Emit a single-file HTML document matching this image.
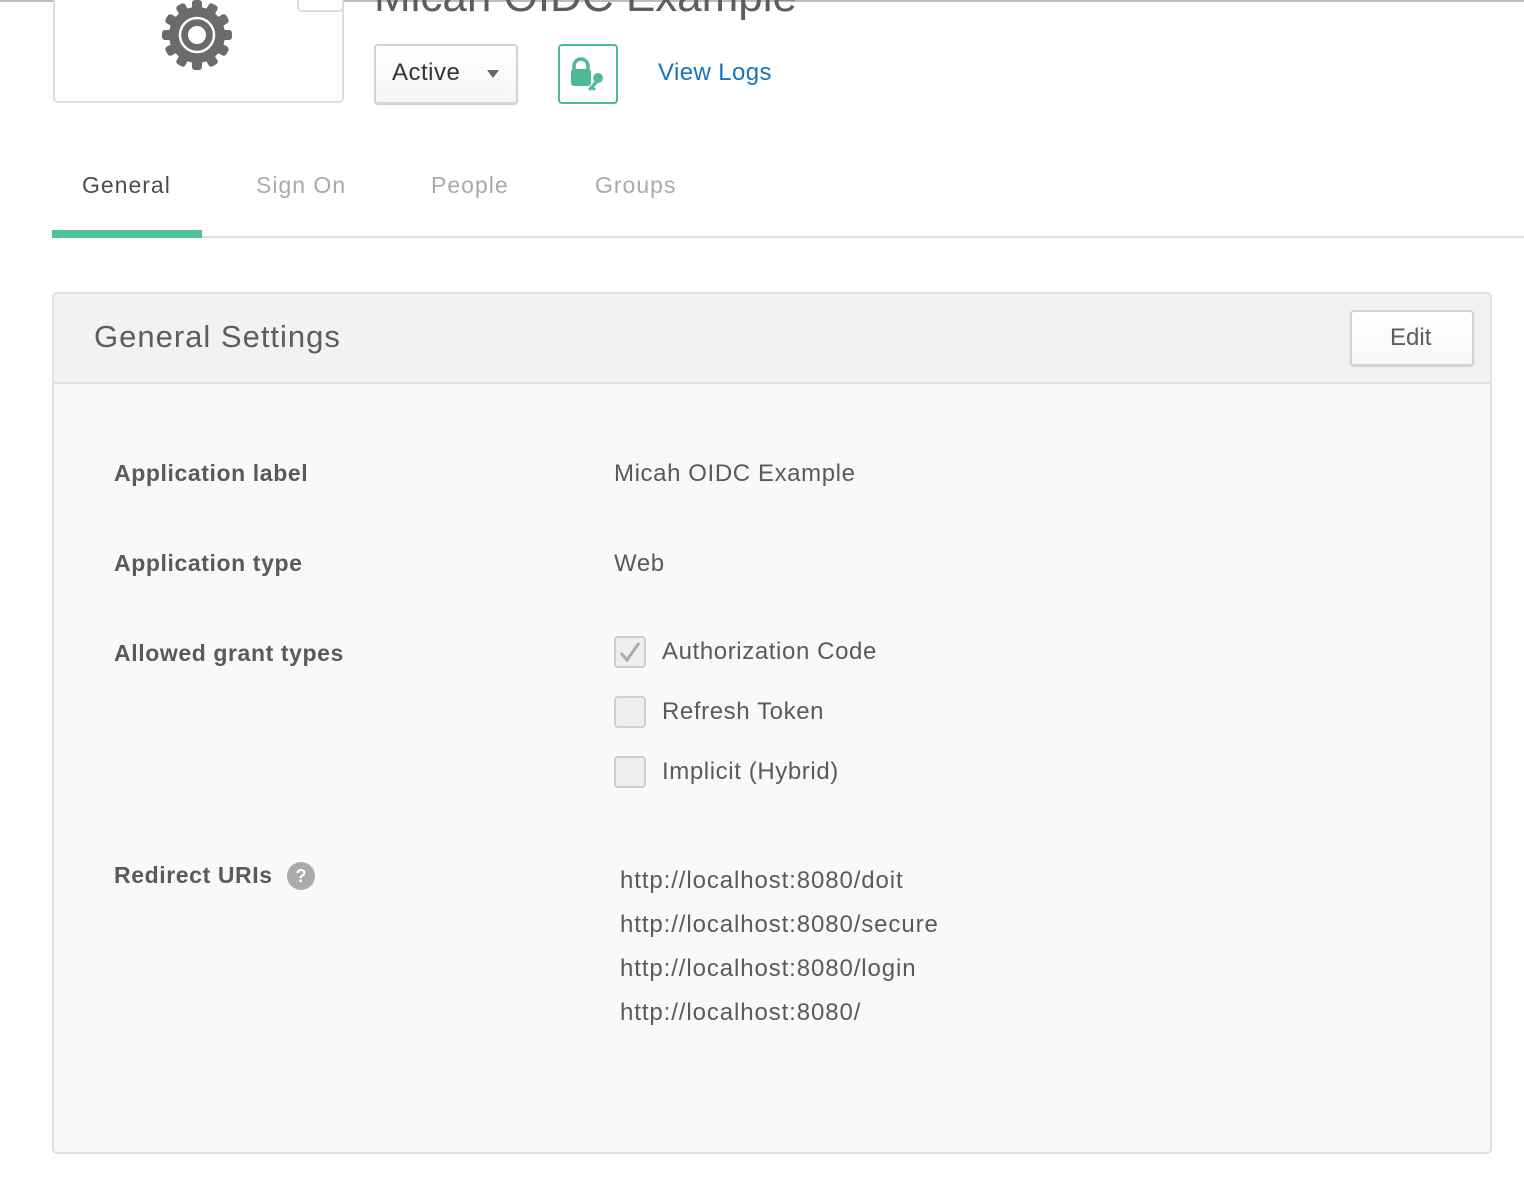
<!DOCTYPE html>
<html><head><meta charset="utf-8">
<style>
*{margin:0;padding:0;box-sizing:border-box}
body{width:1524px;height:1190px;background:#fff;font-family:"Liberation Sans",sans-serif;color:#5d5d5d;position:relative;overflow:hidden}
.a{position:absolute;white-space:nowrap}
.lbl{font-weight:bold;font-size:23px;color:#5a5a5a;letter-spacing:0.6px}
.val{font-size:24px;color:#5a5a5a;letter-spacing:0.6px}
.cb{position:absolute;width:32px;height:32px;border:2px solid #cfcfcf;border-radius:4px;background:#efefef}
.url{font-size:24px;color:#5a5a5a;letter-spacing:0.9px}
.tab{font-size:23px;letter-spacing:1px}
</style></head><body>
<div class="a" style="left:0;top:0;width:1524px;height:2px;background:#bdbdbd"></div>
<div class="a" style="left:53px;top:-10px;width:291px;height:113px;border:2px solid #ddd;border-radius:5px;background:#fff"></div>
<div class="a" style="left:297px;top:-10px;width:47px;height:22px;border:2px solid #ddd;border-radius:5px;background:#fff"></div>
<svg class="a" style="left:161px;top:-1px" width="72" height="72" viewBox="-36 -36 72 72">
<g fill="#6b6b6b">
<circle r="28"/>
<g id="t"><rect x="-5" y="-35" width="10" height="12" rx="3"/></g>
<use href="#t" transform="rotate(30)"/><use href="#t" transform="rotate(60)"/><use href="#t" transform="rotate(90)"/><use href="#t" transform="rotate(120)"/><use href="#t" transform="rotate(150)"/><use href="#t" transform="rotate(180)"/><use href="#t" transform="rotate(210)"/><use href="#t" transform="rotate(240)"/><use href="#t" transform="rotate(270)"/><use href="#t" transform="rotate(300)"/><use href="#t" transform="rotate(330)"/>
</g>
<circle r="17" fill="none" stroke="#fff" stroke-width="2.5"/>
<circle r="9" fill="#fff"/>
</svg>
<div class="a" style="left:374px;top:-28px;font-size:44px;color:#5d5d5d">Micah OIDC Example</div>
<div class="a" style="left:374px;top:44px;width:144px;height:60px;border:2px solid #d3d3d3;border-radius:4px;background:linear-gradient(#fff,#f5f5f5);box-shadow:0 1px 1px #ccc"></div>
<div class="a" style="left:392px;top:59px;font-size:24px;color:#333;letter-spacing:0.5px">Active</div>
<div class="a" style="left:487px;top:70px;width:0;height:0;border-left:6px solid transparent;border-right:6px solid transparent;border-top:8px solid #666"></div>
<div class="a" style="left:558px;top:44px;width:60px;height:60px;border:2px solid #4fb996;border-radius:4px;background:#fff"></div>
<svg class="a" style="left:568px;top:54px" width="40" height="40" viewBox="0 0 40 40">
<path d="M6 16v-4a7 7 0 0 1 14 0v4" fill="none" stroke="#4fb996" stroke-width="3.5"/>
<rect x="3" y="15" width="20" height="17" rx="3" fill="#4fb996"/>
<circle cx="30" cy="24" r="5" fill="#4fb996"/>
<path d="M28 26l-8 9l2 2l2-2l2 2l2-2l-2-2l4-4z" fill="#4fb996"/>
</svg>
<div class="a" style="left:658px;top:59px;font-size:24px;color:#1a73ba;letter-spacing:0.4px">View Logs</div>
<div class="a tab" style="left:82px;top:172px;color:#4d4d4d">General</div>
<div class="a tab" style="left:256px;top:172px;color:#aaa">Sign On</div>
<div class="a tab" style="left:431px;top:172px;color:#aaa">People</div>
<div class="a tab" style="left:595px;top:172px;color:#aaa">Groups</div>
<div class="a" style="left:52px;top:236px;width:1472px;height:2px;background:#e2e2e2"></div>
<div class="a" style="left:52px;top:230px;width:150px;height:8px;background:#4fc19b"></div>
<div class="a" style="left:52px;top:292px;width:1440px;height:862px;border:2px solid #e1e1e1;border-radius:5px;background:#f9f9f9;overflow:hidden">
<div style="height:90px;background:#f2f2f2;border-bottom:2px solid #e1e1e1"></div>
</div>
<div class="a" style="left:94px;top:319px;font-size:31px;color:#5d5d5d;letter-spacing:1px">General Settings</div>
<div class="a" style="left:1350px;top:310px;width:124px;height:56px;border:2px solid #d3d3d3;border-radius:4px;background:linear-gradient(#fff,#f7f7f7);box-shadow:0 1px 1px #ccc"></div>
<div class="a" style="left:1390px;top:324px;font-size:24px;color:#5d5d5d">Edit</div>
<div class="a lbl" style="left:114px;top:460px">Application label</div>
<div class="a val" style="left:614px;top:460px">Micah OIDC Example</div>
<div class="a lbl" style="left:114px;top:550px">Application type</div>
<div class="a val" style="left:614px;top:550px">Web</div>
<div class="a lbl" style="left:114px;top:640px">Allowed grant types</div>
<div class="cb" style="left:614px;top:636px"></div>
<svg class="a" style="left:616px;top:638px" width="28" height="28" viewBox="0 0 28 28"><path d="M5 15l6 7L23 5" fill="none" stroke="#aaa" stroke-width="3"/></svg>
<div class="a val" style="left:662px;top:638px">Authorization Code</div>
<div class="cb" style="left:614px;top:696px"></div>
<div class="a val" style="left:662px;top:698px">Refresh Token</div>
<div class="cb" style="left:614px;top:756px"></div>
<div class="a val" style="left:662px;top:758px">Implicit (Hybrid)</div>
<div class="a lbl" style="left:114px;top:862px">Redirect URIs</div>
<div class="a" style="left:287px;top:862px;width:28px;height:28px;border-radius:50%;background:#aaa;color:#fff;font-weight:bold;font-size:18px;text-align:center;line-height:28px">?</div>
<div class="a url" style="left:620px;top:867px">http://localhost:8080/doit</div>
<div class="a url" style="left:620px;top:911px">http://localhost:8080/secure</div>
<div class="a url" style="left:620px;top:955px">http://localhost:8080/login</div>
<div class="a url" style="left:620px;top:999px">http://localhost:8080/</div>
</body></html>
